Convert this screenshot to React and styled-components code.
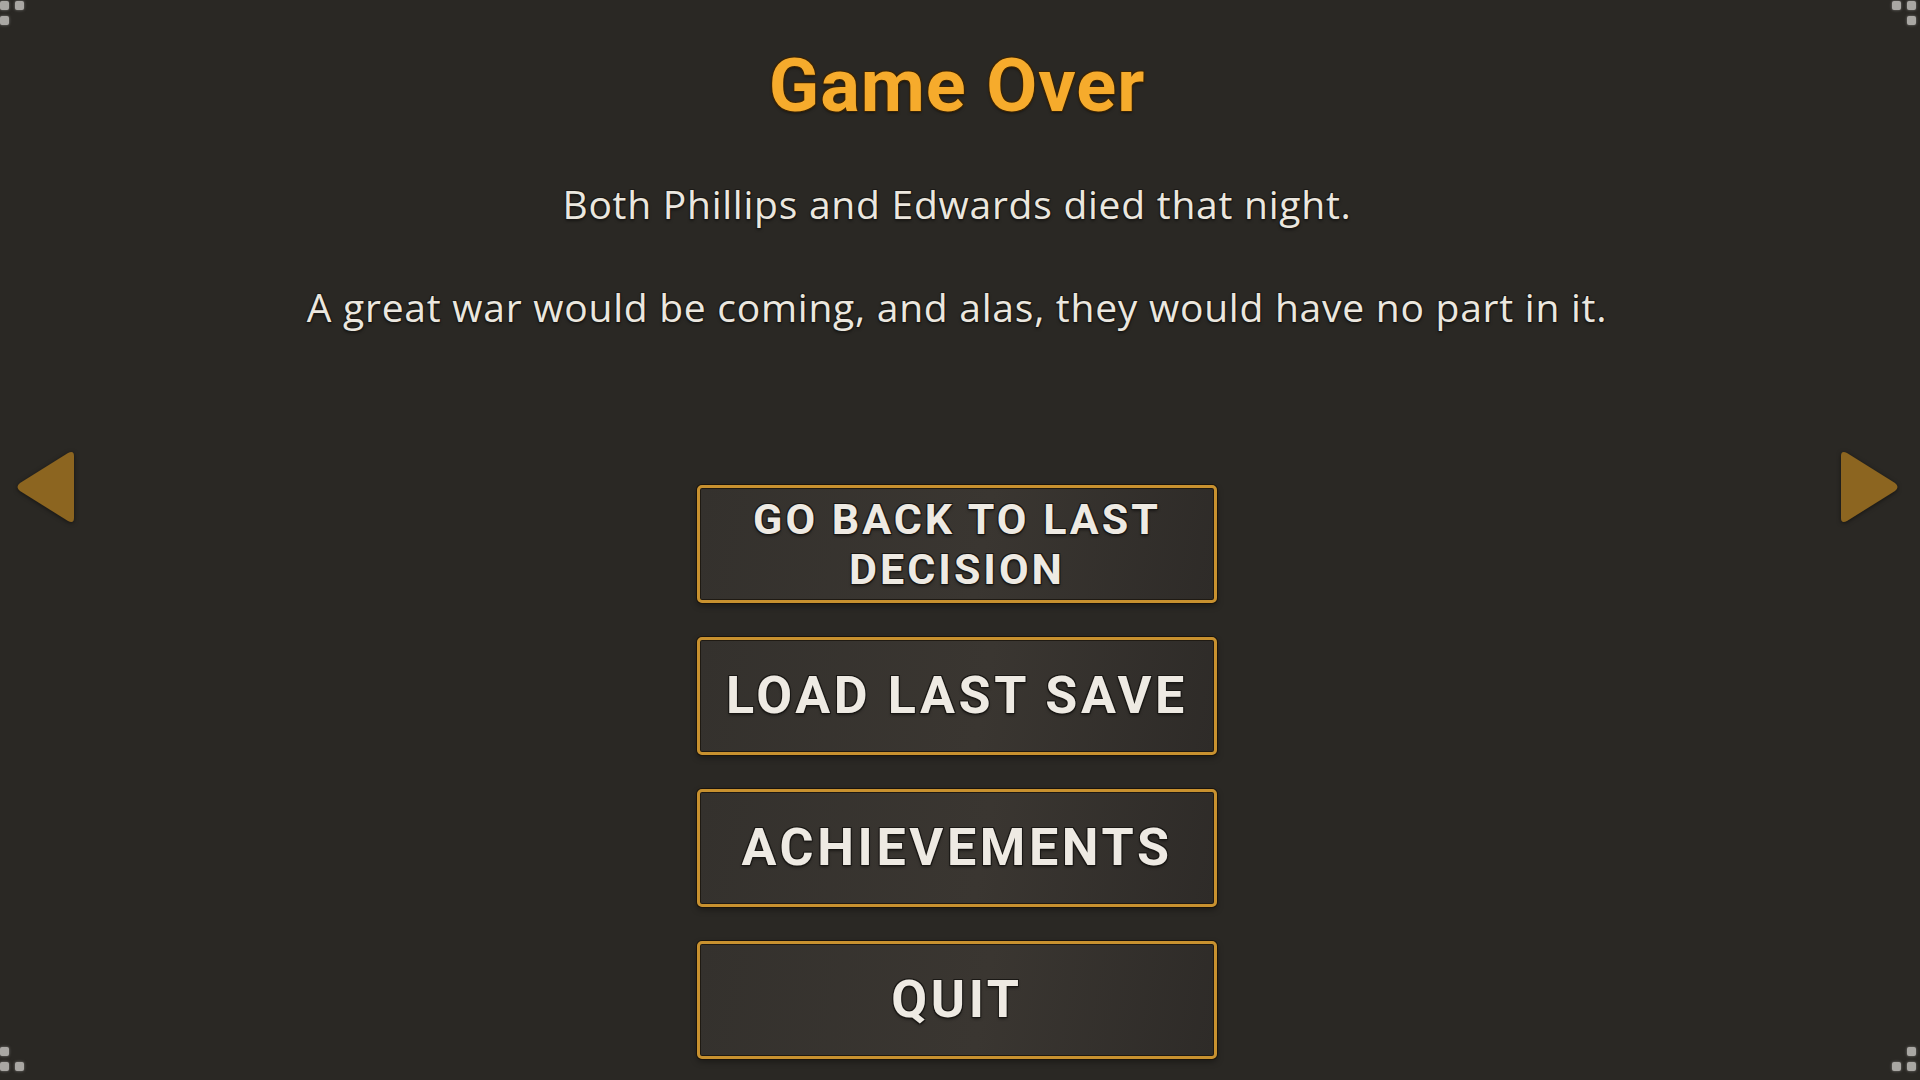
import React from 'react'
import styled, { createGlobalStyle } from 'styled-components'

const GlobalStyle = createGlobalStyle`
  html, body {
    margin: 0;
    padding: 0;
    background: #2a2824;
  }
  * {
    box-sizing: border-box;
  }
`

const outline = (c) =>
  `-1px -1px 0 ${c}, 1px -1px 0 ${c}, -1px 1px 0 ${c}, 1px 1px 0 ${c}, 0 2px 3px rgba(0, 0, 0, 0.5)`

const buttons = [
  { id: 'back', label: 'GO BACK TO LAST DECISION', small: true },
  { id: 'load', label: 'LOAD LAST SAVE' },
  { id: 'achievements', label: 'ACHIEVEMENTS' },
  { id: 'quit', label: 'QUIT' }
]

const corners = [
  { id: 'tl', top: true, left: true },
  { id: 'tr', top: true, left: false },
  { id: 'bl', top: false, left: true },
  { id: 'br', top: false, left: false }
]

const CornerMark = ({ top, left }) => {
  // three dots forming an L pointing into the corner
  const cells = top
    ? left
      ? [1, 1, 1, 0]
      : [1, 1, 0, 1]
    : left
      ? [1, 0, 1, 1]
      : [0, 1, 1, 1]
  return (
    <Corner $top={top} $left={left}>
      {cells.map((on, i) => (
        <Dot key={i} $on={on} />
      ))}
    </Corner>
  )
}

const Arrow = ({ dir }) => (
  <svg width="60" height="74" viewBox="0 0 60 74">
    {dir === 'left' ? (
      <path
        d="M4 33 L52 3 Q58 0 58 6 L58 68 Q58 74 52 71 L4 41 Q-1 37 4 33 Z"
        fill="#8c6520"
      />
    ) : (
      <path
        d="M56 33 L8 3 Q2 0 2 6 L2 68 Q2 74 8 71 L56 41 Q61 37 56 33 Z"
        fill="#8c6520"
      />
    )}
  </svg>
)

const App = () => {
  return (
    <>
      <GlobalStyle />
      <Screen>
        {corners.map((c) => (
          <CornerMark key={c.id} top={c.top} left={c.left} />
        ))}

        <NavColumn $side="left">
          <NavButton aria-label="previous">
            <Arrow dir="left" />
          </NavButton>
        </NavColumn>

        <Main>
          <Title>Game Over</Title>

          <Story>
            <Line>Both Phillips and Edwards died that night.</Line>
            <Line>
              A great war would be coming, and alas, they would have no part in
              it.
            </Line>
          </Story>

          <Menu>
            {buttons.map((b) => (
              <MenuButton key={b.id} $small={b.small}>
                {b.small ? (
                  <>
                    GO BACK TO LAST
                    <br />
                    DECISION
                  </>
                ) : (
                  b.label
                )}
              </MenuButton>
            ))}
          </Menu>
        </Main>

        <NavColumn $side="right">
          <NavButton aria-label="next">
            <Arrow dir="right" />
          </NavButton>
        </NavColumn>
      </Screen>
    </>
  )
}

export default App

const Screen = styled.div`
  position: relative;
  width: 1920px;
  height: 1080px;
  overflow: hidden;
  background: #2a2824;
  display: grid;
  grid-template-columns: 100px 1fr 100px;
`

const Corner = styled.div`
  position: absolute;
  ${(p) => (p.$top ? 'top: 1px;' : 'bottom: 9px;')}
  ${(p) => (p.$left ? 'left: 0;' : 'right: 4px;')}
  display: grid;
  grid-template-columns: 9px 9px;
  grid-template-rows: 9px 9px;
  gap: 6px;
`

const Dot = styled.span`
  width: 9px;
  height: 9px;
  border-radius: 2px;
  background: ${(p) => (p.$on ? '#a9a7a3' : 'transparent')};
  box-shadow: ${(p) => (p.$on ? '0 0 3px rgba(180, 178, 174, 0.6)' : 'none')};
`

const NavColumn = styled.div`
  display: flex;
  align-items: flex-start;
  justify-content: ${(p) => (p.$side === 'left' ? 'flex-start' : 'flex-end')};
  padding-top: 450px;
  padding-left: ${(p) => (p.$side === 'left' ? '16px' : '0')};
  padding-right: ${(p) => (p.$side === 'right' ? '21px' : '0')};
`

const NavButton = styled.button`
  border: none;
  background: none;
  padding: 0;
  cursor: pointer;
  display: flex;
  filter: drop-shadow(0 1px 2px rgba(0, 0, 0, 0.5));
`

const Main = styled.div`
  display: flex;
  flex-direction: column;
  align-items: center;
  padding-top: 48px;
  margin-left: -6px;
`

const Title = styled.h1`
  margin: 0;
  font-family: Roboto, 'Liberation Sans', sans-serif;
  font-weight: 700;
  font-size: 74px;
  line-height: 76px;
  letter-spacing: 1px;
  color: #f6ab2c;
  text-shadow: ${outline('#3a2406')};
`

const Story = styled.div`
  margin-top: 56px;
  display: flex;
  flex-direction: column;
  align-items: center;
  gap: 56px;
`

const Line = styled.p`
  margin: 0;
  font-family: 'Open Sans', 'Noto Sans', sans-serif;
  font-weight: 400;
  font-size: 39px;
  line-height: 47px;
  letter-spacing: 0.75px;
  color: #ebe7df;
  text-shadow: ${outline('#1c1a17')};
  white-space: nowrap;
`

const Menu = styled.div`
  margin-top: 155px;
  display: flex;
  flex-direction: column;
  gap: 34px;
`

const MenuButton = styled.button`
  width: 520px;
  height: 118px;
  padding: 0 10px;
  border: 3px solid #c8912f;
  border-radius: 5px;
  box-shadow: 0 0 0 1px #1a140c, inset 0 0 0 1px #1f1a13,
    0 3px 6px rgba(0, 0, 0, 0.35);
  background: linear-gradient(100deg, #34312d 0%, #3a3631 55%, #2e2b28 100%);
  display: flex;
  align-items: center;
  justify-content: center;
  text-align: center;
  font-family: Roboto, 'Liberation Sans', sans-serif;
  font-weight: 700;
  font-size: ${(p) => (p.$small ? '43px' : '52px')};
  line-height: ${(p) => (p.$small ? '50px' : '60px')};
  letter-spacing: 0.07em;
  color: #eeeae3;
  text-shadow: ${outline('#1a1815')};
  cursor: pointer;
`
